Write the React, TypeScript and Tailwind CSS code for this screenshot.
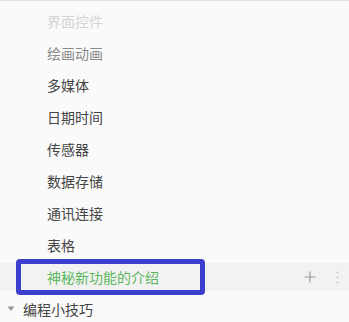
const items = ['界面控件', '绘画动画', '多媒体', '日期时间', '传感器', '数据存储', '通讯连接', '表格'];

const App = () => {
  return (
    <div
      className="w-[349px] h-[322px] overflow-hidden bg-[#fafafa] border-t border-[#e3e3e3] pt-1 flex flex-col text-[14px]"
      style={{ fontFamily: '"Noto Sans CJK SC", "Noto Sans", sans-serif' }}
    >
      {items.map((name, i) => (
        <div key={name} className="shrink-0 h-7 my-0.5 flex items-center pl-[47px]">
          <span
            className={
              i === 0 ? 'text-[#d4d4d4]' : i === 1 ? 'text-[#8a8a8a]' : 'text-[#444]'
            }
          >
            {name}
          </span>
        </div>
      ))}

      {/* selected row */}
      <div className="relative shrink-0 h-7 my-0.5 flex items-center pl-[47px] pr-[10px] bg-[#f2f2f2]">
        <span className="text-[#5cb860]">神秘新功能的介绍</span>
        <div className="ml-auto flex items-center gap-5 text-[#9a9a9a]">
          <svg width="12" height="12" viewBox="0 0 12 12">
            <path d="M6 0.5v11M0.5 6h11" stroke="currentColor" strokeWidth="1.2" />
          </svg>
          <svg width="3" height="13" viewBox="0 0 3 13">
            <circle cx="1.5" cy="1.5" r="1" fill="#c4c4c4" />
            <circle cx="1.5" cy="6.5" r="1" fill="#c4c4c4" />
            <circle cx="1.5" cy="11.5" r="1" fill="#c4c4c4" />
          </svg>
        </div>
        <div className="absolute -top-1 -bottom-1 left-4 w-[189px] border-[5px] border-[#3b3fcc] rounded-[4px]" />
      </div>

      <div className="shrink-0 h-7 my-0.5 flex items-center pl-[7px]">
        <svg width="8" height="6" viewBox="0 0 8 6" className="mr-2">
          <path d="M0.5 0.5h7L4 5z" fill="#9a9a9a" />
        </svg>
        <span className="text-[#444]">编程小技巧</span>
      </div>
    </div>
  );
};

export default App;
